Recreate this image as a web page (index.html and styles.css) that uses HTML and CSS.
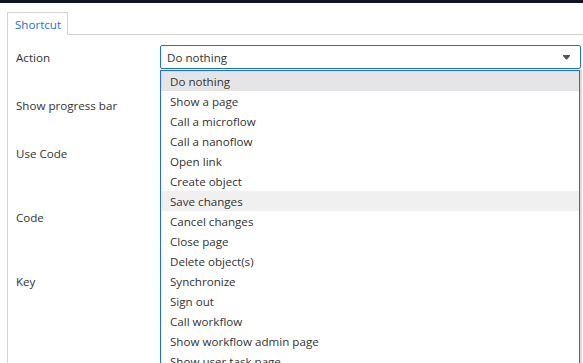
FILE: index.html
```html
<!DOCTYPE html>
<html lang="en">
<head>
  <meta charset="UTF-8" />
  <title>Shortcut</title>
  <link rel="stylesheet" href="styles.css">
</head>
<body>
  <div class="topbar"></div>
  <div class="tabs">
    <div class="tab active">Shortcut</div>
    <div class="tab-rest"></div>
  </div>
  <div class="panel">
    <div class="row row-action">
      <label>Action</label>
      <div class="select-wrap">
        <div class="select">
          <span>Do nothing</span>
          <svg class="caret" width="7" height="5" viewBox="0 0 7 5"><path d="M0 0H7V1L4 4.5H3L0 1Z" fill="#555"/></svg>
        </div>
        <ul class="options">
          <li class="selected">Do nothing</li>
          <li>Show a page</li>
          <li>Call a microflow</li>
          <li>Call a nanoflow</li>
          <li>Open link</li>
          <li>Create object</li>
          <li class="hover">Save changes</li>
          <li>Cancel changes</li>
          <li>Close page</li>
          <li>Delete object(s)</li>
          <li>Synchronize</li>
          <li>Sign out</li>
          <li>Call workflow</li>
          <li>Show workflow admin page</li>
          <li>Show user task page</li>
        </ul>
      </div>
    </div>
    <div class="row row-progress"><label>Show progress bar</label></div>
    <div class="row row-usecode"><label>Use Code</label></div>
    <div class="row row-code"><label>Code</label></div>
    <div class="row row-key"><label>Key</label></div>
  </div>
</body>
</html>
```

FILE: styles.css
```css
* {
  box-sizing: border-box;
  font-family: 'Open Sans', 'Noto Sans', sans-serif;
}

body {
  margin: 0;
  background-color: #ffffff;
  color: #333333;
  font-size: 11.6px;
  height: 363px;
  overflow: hidden;
}

.topbar {
  height: 3px;
  background-color: #0d1526;
}

.tabs {
  display: flex;
  margin-top: 9px;
  padding-left: 7px;
  height: 23px;
}

.tab {
  width: 61px;
  border: 1px solid #d4d4d4;
  border-bottom: none;
  color: #1a6fe0;
  padding: 3px 0 0 7px;
  line-height: 18px;
}

.tab-rest {
  flex: 1;
  border-bottom: 1px solid #d4d4d4;
}

.panel {
  margin-left: 7px;
  border-left: 1px solid #d4d4d4;
  height: 400px;
  padding-top: 10px;
}

.row {
  display: flex;
  align-items: flex-start;
}

.row label {
  width: 152px;
  padding: 1px 0 0 8px;
  line-height: 24px;
}

.row-action { height: 48px; }
.row-progress { height: 48px; }
.row-usecode { height: 64px; }
.row-code { height: 64px; }

.select-wrap {
  position: relative;
  width: 421px;
}

.select {
  height: 24px;
  border: 1px solid #1e6fe6;
  border-radius: 2px;
  display: flex;
  align-items: center;
  justify-content: space-between;
  padding: 1px 10px 0 6px;
}

.options {
  position: absolute;
  top: 25px;
  left: 0;
  width: 420px;
  margin: 0;
  padding: 0;
  list-style: none;
  background-color: #ffffff;
  border: 1px solid #1e6fe6;
  border-bottom: none;
  box-shadow: 2px 0 0 #dcdcdc;
}

.options li {
  height: 20px;
  line-height: 20px;
  padding: 1px 0 0 9px;
}

.options li.selected {
  background-color: #e5e5e7;
}

.options li.hover {
  background-color: #f0f0f0;
}
```
